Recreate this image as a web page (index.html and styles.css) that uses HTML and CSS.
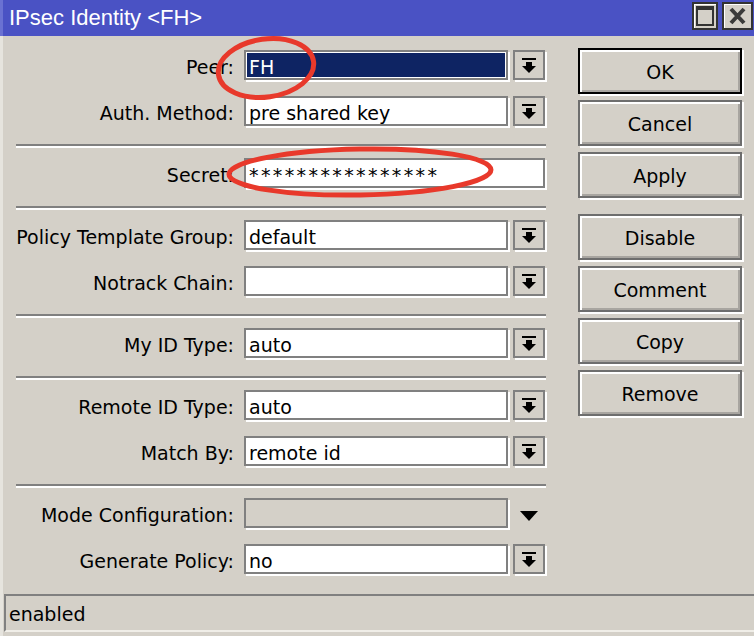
FILE: index.html
```html
<!DOCTYPE html>
<html lang="en">
<head>
    <meta charset="UTF-8">
    <meta name="viewport" content="width=device-width, initial-scale=1.0">
    <title>IPsec Identity &lt;FH&gt;</title>
    <link rel="stylesheet" href="styles.css">
</head>
<body>
    <div class="window">
        <div class="titlebar">
            <span class="title">IPsec Identity &lt;FH&gt;</span>
            <div class="title-buttons">
                <span class="tbtn max">
                    <svg width="22" height="24" viewBox="0 0 22 24"><rect x="3" y="3" width="16" height="18" fill="none" stroke="#333" stroke-width="2"/><rect x="2" y="2" width="18" height="4" fill="#333"/></svg>
                </span>
                <span class="tbtn close">
                    <svg width="27" height="24" viewBox="0 0 27 24"><path d="M7 5 L20 19 M20 5 L7 19" stroke="#3a3a3a" stroke-width="4"/></svg>
                </span>
            </div>
        </div>

        <div class="content">
            <div class="main">
                <div class="form">
                    <!-- Peer / auth -->
                    <div class="row">
                        <label>Peer:</label>
                        <div class="field selected">FH</div>
                        <span class="drop"><svg width="14" height="15" viewBox="0 0 14 15"><rect x="0" y="0" width="14" height="2"/><rect x="4" y="4" width="6" height="4"/><polygon points="0,8 14,8 7,15"/></svg></span>
                    </div>
                    <div class="row">
                        <label>Auth. Method:</label>
                        <div class="field">pre shared key</div>
                        <span class="drop"><svg width="14" height="15" viewBox="0 0 14 15"><rect x="0" y="0" width="14" height="2"/><rect x="4" y="4" width="6" height="4"/><polygon points="0,8 14,8 7,15"/></svg></span>
                    </div>
                    <div class="sep"></div>

                    <div class="row">
                        <label>Secret:</label>
                        <div class="field wide"><span class="stars">****************</span></div>
                    </div>
                    <div class="sep"></div>

                    <div class="row">
                        <label>Policy Template Group:</label>
                        <div class="field">default</div>
                        <span class="drop"><svg width="14" height="15" viewBox="0 0 14 15"><rect x="0" y="0" width="14" height="2"/><rect x="4" y="4" width="6" height="4"/><polygon points="0,8 14,8 7,15"/></svg></span>
                    </div>
                    <div class="row">
                        <label>Notrack Chain:</label>
                        <div class="field"></div>
                        <span class="drop"><svg width="14" height="15" viewBox="0 0 14 15"><rect x="0" y="0" width="14" height="2"/><rect x="4" y="4" width="6" height="4"/><polygon points="0,8 14,8 7,15"/></svg></span>
                    </div>
                    <div class="sep"></div>

                    <div class="row">
                        <label>My ID Type:</label>
                        <div class="field">auto</div>
                        <span class="drop"><svg width="14" height="15" viewBox="0 0 14 15"><rect x="0" y="0" width="14" height="2"/><rect x="4" y="4" width="6" height="4"/><polygon points="0,8 14,8 7,15"/></svg></span>
                    </div>
                    <div class="sep"></div>

                    <div class="row">
                        <label>Remote ID Type:</label>
                        <div class="field">auto</div>
                        <span class="drop"><svg width="14" height="15" viewBox="0 0 14 15"><rect x="0" y="0" width="14" height="2"/><rect x="4" y="4" width="6" height="4"/><polygon points="0,8 14,8 7,15"/></svg></span>
                    </div>
                    <div class="row">
                        <label>Match By:</label>
                        <div class="field">remote id</div>
                        <span class="drop"><svg width="14" height="15" viewBox="0 0 14 15"><rect x="0" y="0" width="14" height="2"/><rect x="4" y="4" width="6" height="4"/><polygon points="0,8 14,8 7,15"/></svg></span>
                    </div>
                    <div class="sep"></div>

                    <div class="row">
                        <label>Mode Configuration:</label>
                        <div class="field disabled"></div>
                        <span class="expand"><svg width="18" height="10" viewBox="0 0 18 10"><polygon points="0,0 18,0 9,10"/></svg></span>
                    </div>
                    <div class="row">
                        <label>Generate Policy:</label>
                        <div class="field">no</div>
                        <span class="drop"><svg width="14" height="15" viewBox="0 0 14 15"><rect x="0" y="0" width="14" height="2"/><rect x="4" y="4" width="6" height="4"/><polygon points="0,8 14,8 7,15"/></svg></span>
                    </div>
                </div>

                <div class="buttons">
                    <div class="btn default">OK</div>
                    <div class="btn">Cancel</div>
                    <div class="btn">Apply</div>
                    <div class="btn spaced">Disable</div>
                    <div class="btn">Comment</div>
                    <div class="btn">Copy</div>
                    <div class="btn">Remove</div>
                </div>
            </div>

            <div class="status">enabled</div>
        </div>

        <!-- red marks drawn over the screenshot -->
        <svg class="marks" width="754" height="636" viewBox="0 0 754 636">
            <ellipse cx="266" cy="68" rx="48" ry="29" transform="rotate(-8 266 68)" fill="none" stroke="#e8392b" stroke-width="5"/>
            <ellipse cx="360" cy="172" rx="131" ry="23" transform="rotate(-1 360 172)" fill="none" stroke="#e8392b" stroke-width="5"/>
        </svg>
    </div>
</body>
</html>
```

FILE: styles.css
```css
body {
    margin: 0;
    font-family: "DejaVu Sans", Verdana, sans-serif;
    font-size: 19px;
    color: #000;
    background: #d4d0c8;
}
.window {
    position: relative;
    width: 754px;
    height: 636px;
    overflow: hidden;
    background: #d4d0c8;
}
.titlebar {
    height: 36px;
    background: #4a52c4;
    border-left: 3px solid #6a71d2;
    display: flex;
    justify-content: space-between;
    align-items: center;
    padding: 0 1px 0 6px;
    box-sizing: border-box;
}
.title {
    color: #fff;
    font-family: "Liberation Sans", Arial, sans-serif;
    font-size: 22px;
}
.title-buttons {
    display: flex;
    gap: 4px;
    align-self: flex-start;
    margin-top: 2px;
}
.tbtn {
    display: flex;
    box-sizing: border-box;
    height: 28px;
    border: 2px solid #333;
    background: #d4d0c8;
    box-shadow: inset 1px 1px 0 #fff;
}
.tbtn.max {
    width: 26px;
}
.tbtn.close {
    width: 31px;
}
.content {
    border-left: 3px solid #e6e4de;
    height: 600px;
}
.main {
    display: flex;
}
.form {
    width: 575px;
    padding-top: 14px;
}
.row {
    display: grid;
    grid-template-columns: 236px 264px 32px;
    column-gap: 5px;
    height: 30px;
    margin-bottom: 16px;
}
.row:last-child {
    margin-bottom: 0;
}
.row label {
    text-align: right;
    padding-right: 5px;
    line-height: 34px;
    white-space: nowrap;
}
.field {
    box-sizing: border-box;
    height: 30px;
    border: 2px solid #808080;
    box-shadow: 2px 2px 0 #fff;
    background: #fff;
    padding: 2px 0 0 3px;
    line-height: 26px;
    white-space: nowrap;
    overflow: hidden;
}
.field.selected {
    background: #0e2463;
    color: #fff;
    box-shadow: 2px 2px 0 #fff, inset 0 0 0 1px #fff;
}
.field.wide {
    grid-column: 2 / 4;
}
.field.disabled {
    background: #d4d0c8;
}
.stars {
    letter-spacing: 2.4px;
}
.drop {
    box-sizing: border-box;
    height: 30px;
    border: 2px solid #808080;
    box-shadow: 2px 2px 0 #fff;
    background: #d4d0c8;
    display: flex;
    align-items: center;
    justify-content: center;
}
.expand {
    display: flex;
    align-items: center;
    justify-content: center;
    padding-top: 2px;
}
.sep {
    height: 2px;
    background: #808080;
    border-bottom: 2px solid #fff;
    margin: 18px 0 10px 13px;
    width: 530px;
}
.buttons {
    width: 164px;
    padding-top: 12px;
    display: flex;
    flex-direction: column;
    gap: 6px;
}
.btn {
    box-sizing: border-box;
    height: 46px;
    border: 2px solid #6e6e6e;
    box-shadow: 2px 2px 0 #fff, inset 2px 2px 0 #fff, inset -2px -2px 0 #a8a5a0;
    text-align: center;
    line-height: 44px;
}
.btn.default {
    border-color: #000;
}
.btn.spaced {
    margin-top: 10px;
}
.status {
    box-sizing: border-box;
    margin: 20px 0 0 1px;
    height: 38px;
    border-top: 2px solid #808080;
    border-left: 2px solid #808080;
    border-bottom: 2px solid #f0eee8;
    padding-left: 3px;
    line-height: 36px;
}
.marks {
    position: absolute;
    left: 0;
    top: 0;
    pointer-events: none;
}
```
